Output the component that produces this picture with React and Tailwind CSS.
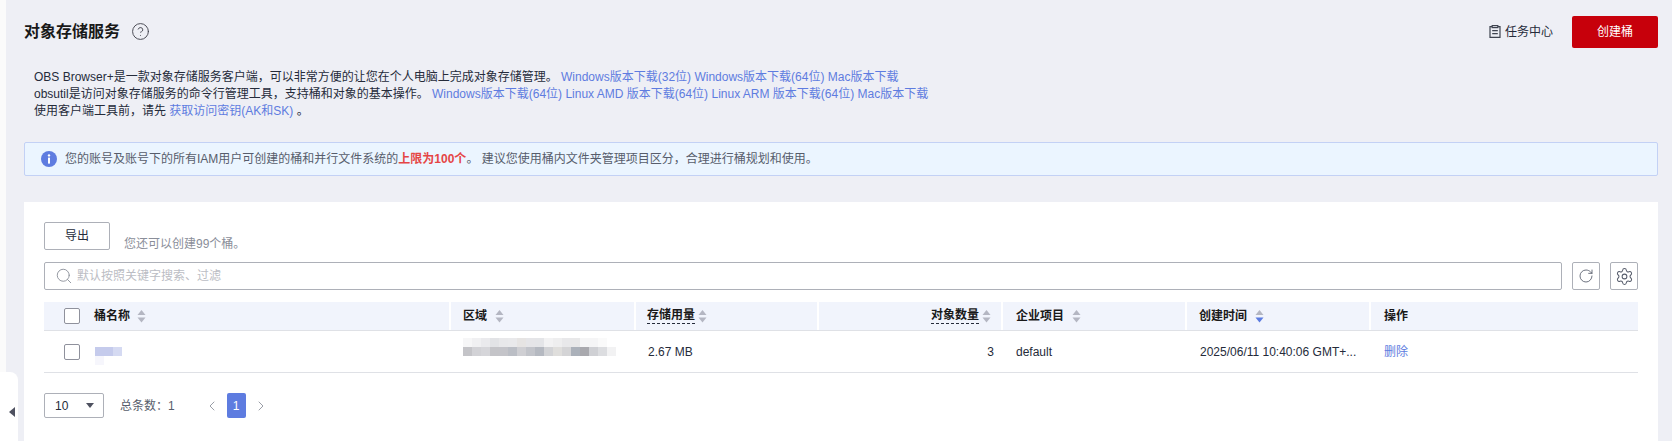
import React from 'react';
import { CircleHelp, Search, RotateCw, Settings, ChevronLeft, ChevronRight } from 'lucide-react';

const FONT = "font-['Liberation_Sans','Noto_Sans_CJK_SC',sans-serif]";

// Sort arrows shown beside the table headers
const SortIcon = ({ active, className = 'ml-2' }) => (
    <svg width="9" height="13" viewBox="0 0 9 13" className={`shrink-0 ${className}`}>
        <path d="M4.5 0 L8.5 5 L0.5 5 Z" fill="#b4b6c2" />
        <path d="M0.5 7.5 L8.5 7.5 L4.5 12.5 Z" fill={active ? '#5b7be0' : '#b4b6c2'} />
    </svg>
);

// Pixelated blocks that hide the bucket name and region
const Mosaic = ({ cells, size, width, height }) => (
    <svg width={width} height={height} className="block">
        {cells.map(([x, y, c, w], i) => (
            <rect key={i} x={x * size} y={y * size} width={(w || 1) * size} height={size} fill={c} />
        ))}
    </svg>
);

const nameCells = [
    [0, 1, '#c5cbec', 2], [2, 1, '#d5daf2', 1], [0, 2, '#f6f6fc', 1],
];

const regionTop = ['#f6f6f7', '#f0f0f2', '#eaeaed', '#e2e3e6', '#e8e8ea', '#e9e9eb', '#e6e4e3', '#e5e5e8', '#e4e5e8', '#f2f2f3', '#eeeeef', '#e8e8ea', '#e8e8e9', '#f5f5f6', '#f5f5f6', '#fafafa'];
const regionBottom = ['#c4c4c8', '#d2d2d6', '#d6d6da', '#c4c4c8', '#c4c4c9', '#bbbec5', '#cfcfd3', '#c2c4ca', '#b5b9c1', '#d2d3d6', '#dfdedc', '#d4d4d6', '#abb1ba', '#a9a9ae', '#cfd0d4', '#dcdde0', '#f2f2f3'];
const regionCells = [
    ...regionTop.map((c, i) => [i, 0, c]),
    ...regionBottom.map((c, i) => [i, 1, c]),
];

const Checkbox = () => (
    <span className="block w-4 h-4 border border-[#8f919c] rounded-[2px] bg-white shrink-0" />
);

const Header = ({ className, children }) => (
    <div className={`flex items-center h-full border-l-2 border-white first:border-l-0 font-bold text-[#191919] ${className}`}>
        {children}
    </div>
);

const Cell = ({ className, children }) => (
    <div className={`flex items-center h-full text-[#252b3a] ${className}`}>{children}</div>
);

const Link = ({ children }) => <a className="text-[#5e7ce0]">{children}</a>;

export default function App() {
    return (
        <div className={`${FONT} relative flex w-[1672px] h-[441px] overflow-hidden bg-[#eeeff5] text-[12px]`}>
            {/* Collapsed side nav */}
            <div className="w-[6px] shrink-0 bg-[#fbfbfb]" />
            <div className="absolute left-0 bottom-0 w-[18px] h-[69px] bg-white rounded-tr-[8px] flex items-center justify-end pr-[3px]">
                <span className="block mt-[11px] border-y-[5px] border-y-transparent border-r-[6px] border-r-[#4e5160]" />
            </div>

            <main className="flex-1 flex flex-col min-w-0 pl-[18px] pr-[14px]">
                {/* Title row */}
                <div className="flex items-center h-[68px] shrink-0 pb-[5px]">
                    <h1 className="text-[16px] font-bold text-[#191919]">对象存储服务</h1>
                    <CircleHelp size={19} strokeWidth={1.2} className="ml-[11px] text-[#44464f]" />
                    <div className="ml-auto flex items-center text-[#252b3a]">
                        <svg width="12" height="13" viewBox="0 0 12 13" fill="none" stroke="#3f4450" strokeWidth="1.2" className="mr-[4px]">
                            <path d="M3 1.6 H1 V12.4 H11 V1.6 H9" />
                            <rect x="3.2" y="0.6" width="5.6" height="2" />
                            <path d="M3.2 5.6 H8.8 M3.2 8.6 H8.8" />
                        </svg>
                        <span>任务中心</span>
                    </div>
                    <button className="ml-[19px] w-[86px] h-[32px] bg-[#c7000b] text-white rounded-[2px]">创建桶</button>
                </div>

                {/* Client tool downloads */}
                <div className="pl-[10px] pt-[1px] text-[#252b3a] leading-[17px] h-[74px] shrink-0">
                    <p>OBS Browser+是一款对象存储服务客户端，可以非常方便的让您在个人电脑上完成对象存储管理。 <Link>Windows版本下载(32位)</Link> <Link>Windows版本下载(64位)</Link> <Link>Mac版本下载</Link></p>
                    <p>obsutil是访问对象存储服务的命令行管理工具，支持桶和对象的基本操作。 <Link>Windows版本下载(64位)</Link> <Link>Linux AMD 版本下载(64位)</Link> <Link>Linux ARM 版本下载(64位)</Link> <Link>Mac版本下载</Link></p>
                    <p>使用客户端工具前，请先 <Link>获取访问密钥(AK和SK)</Link> 。</p>
                </div>

                {/* Quota notice */}
                <div className="flex items-center h-[34px] shrink-0 pl-[16px] border border-[#c3d1f5] bg-[#ebf5ff] rounded-[2px] text-[#575d6c]">
                    <svg width="16" height="16" viewBox="0 0 16 16" className="mr-[8px] shrink-0">
                        <circle cx="8" cy="8" r="8" fill="#5e7ce0" />
                        <circle cx="8" cy="4.4" r="1.2" fill="#fff" />
                        <rect x="7" y="6.6" width="2" height="6" fill="#fff" />
                    </svg>
                    <span>您的账号及账号下的所有IAM用户可创建的桶和并行文件系统的<b className="text-[#e54545]">上限为100个</b>。 建议您使用桶内文件夹管理项目区分，合理进行桶规划和使用。</span>
                </div>

                {/* Bucket list */}
                <section className="mt-[26px] flex-1 bg-white pl-[20px] pr-[20px] pt-[20px]">
                    <div className="flex items-end">
                        <button className="w-[66px] h-[28px] border border-[#adb0b8] rounded-[2px] text-[#252b3a]">导出</button>
                        <span className="ml-[14px] text-[#8a8e99] leading-[14px] translate-y-[1px]">您还可以创建99个桶。</span>
                    </div>

                    <div className="flex items-center mt-[12px] h-[28px]">
                        <div className="flex items-center flex-1 h-full border border-[#adb0b8] rounded-[2px] pl-[10px]">
                            <Search size={18} strokeWidth={1.2} className="text-[#8a8e99]" />
                            <span className="ml-[4px] text-[#bbbdc4]">默认按照关键字搜索、过滤</span>
                        </div>
                        <button className="ml-[10px] w-[28px] h-full flex items-center justify-center border border-[#adb0b8] rounded-[2px] text-[#575d6c]">
                            <RotateCw size={16} strokeWidth={1.3} />
                        </button>
                        <button className="ml-[10px] w-[28px] h-full flex items-center justify-center border border-[#adb0b8] rounded-[2px] text-[#575d6c]">
                            <Settings size={19} strokeWidth={1.3} />
                        </button>
                    </div>

                    {/* Table */}
                    <div className="mt-[12px]">
                        <div className="flex h-[29px] bg-[#f1f4fc] border-b border-[#dfe1e6]">
                            <Header className="w-[405px] pl-[20px]"><Checkbox /><span className="ml-[14px]">桶名称</span><SortIcon className="ml-[7px]" /></Header>
                            <Header className="w-[185px] pl-[12px]">区域<SortIcon /></Header>
                            <Header className="w-[183px] pl-[11px]">
                                <span className="border-b border-dashed border-[#252b3a] leading-[15px]">存储用量</span><SortIcon className="ml-[3px]" />
                            </Header>
                            <Header className="w-[184px] justify-end pr-[10px]">
                                <span className="border-b border-dashed border-[#252b3a] leading-[15px]">对象数量</span><SortIcon className="ml-[3px]" />
                            </Header>
                            <Header className="w-[184px] pl-[13px]">企业项目<SortIcon /></Header>
                            <Header className="w-[184px] pl-[12px]">创建时间<SortIcon active /></Header>
                            <Header className="flex-1 pl-[13px]">操作</Header>
                        </div>
                        <div className="flex h-[42px] border-b border-[#dfe1e6]">
                            <Cell className="w-[405px] pl-[20px]">
                                <Checkbox />
                                <span className="ml-[15px]"><Mosaic cells={nameCells} size={9} width={27} height={27} /></span>
                            </Cell>
                            <Cell className="w-[185px] pl-[14px]"><span className="mb-[9px]"><Mosaic cells={regionCells} size={9} width={153} height={18} /></span></Cell>
                            <Cell className="w-[183px] pl-[14px]">2.67 MB</Cell>
                            <Cell className="w-[185px] justify-end pr-[8px]">3</Cell>
                            <Cell className="w-[184px] pl-[14px]">default</Cell>
                            <Cell className="w-[184px] pl-[14px]">2025/06/11 10:40:06 GMT+...</Cell>
                            <Cell className="flex-1 pl-[14px]"><Link>删除</Link></Cell>
                        </div>
                    </div>

                    {/* Pagination */}
                    <div className="flex items-center mt-[20px] h-[25px] text-[#575d6c]">
                        <div className="flex items-center justify-between w-[60px] h-full border border-[#adb0b8] rounded-[2px] pl-[10px] pr-[9px] text-[#252b3a]">
                            <span>10</span>
                            <span className="block border-x-[4px] border-x-transparent border-t-[5px] border-t-[#4e5160]" />
                        </div>
                        <span className="ml-[16px]">总条数：1</span>
                        <ChevronLeft size={16} strokeWidth={1.3} className="ml-[29px] text-[#8a8e99]" />
                        <span className="ml-[7px] w-[19px] h-full flex items-center justify-center bg-[#5e7ce0] text-white rounded-[2px]">1</span>
                        <ChevronRight size={16} strokeWidth={1.3} className="ml-[7px] text-[#8a8e99]" />
                    </div>
                </section>
            </main>
        </div>
    );
}
